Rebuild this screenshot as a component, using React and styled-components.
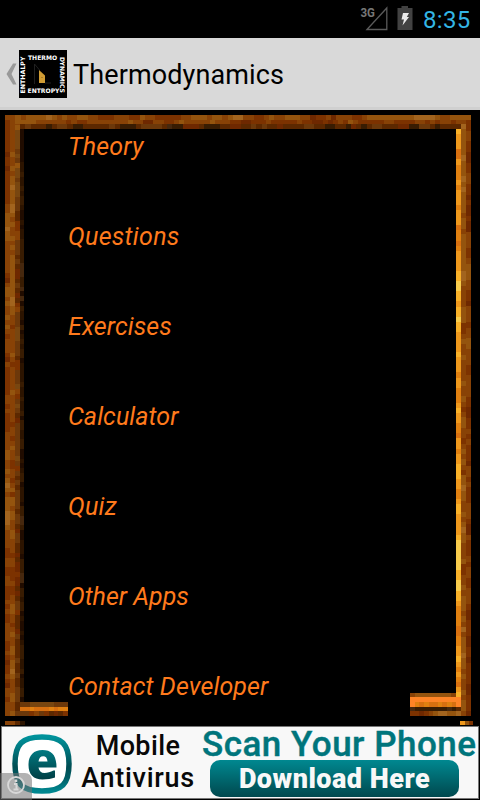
import React from 'react'
import styled, { createGlobalStyle } from 'styled-components'

const GlobalStyle = createGlobalStyle`
  body {
    margin: 0;
    background: #000;
    font-family: Roboto, sans-serif;
    overflow: hidden;
  }
`

const menu = [
  { label: 'Theory', spacing: 0.2 },
  { label: 'Questions', spacing: 0.3 },
  { label: 'Exercises', spacing: 0.12 },
  { label: 'Calculator', spacing: 0.08 },
  { label: 'Quiz', spacing: 0.25 },
  { label: 'Other Apps', spacing: 0 },
  { label: 'Contact Developer', spacing: 0.12 },
]

const WOOD = {
  a: '#7c3200',
  b: '#884206',
  c: '#94540e',
  d: '#a2641e',
  e: '#6e2800',
  f: '#5c2800',
  g: '#2c1400',
  h: '#381c02',
  i: '#46280e',
  j: '#200c00',
  k: '#6c380a',
  l: '#784610',
  o: '#e08010',
  p: '#ee981c',
  q: '#f8b028',
  r: '#f8cc4c',
  s: '#d87010',
  t: '#ff8426',
}

// One letter is one block of the pixelated wood, in order along the strip.
const strips = [
  { x: 5, y: 115, w: 5, h: 601, dir: 'v', cells: 'baaaaaaaeaaeaaaaaaabbcccdccbbbbbbbaebccbcbbcbcbabbbaebaaaaaabbabaaaabbbbccbbcbcdcbcccdddcbbbbaabbaabbaaababaabbbbaabaeaabaebbabbb' },
  { x: 10, y: 115, w: 5, h: 601, dir: 'v', cells: 'bbbbbbbbcbbcbccdcccddcbcbbcbcbcccccccccddccbbabbbbbcbabbbbbcbbbbbbabbabcbbaabbabcaccbccbbccbbbabbaaabaabbccbbabcbbccbccdcbbbccbbc' },
  { x: 15, y: 120, w: 5, h: 596, dir: 'v', cells: 'bcllllklkcllklllkkkffaabbkkkfkfeefkfefabkkklllkkkfaakkklbaklkfekkkkkkklkakfkfkkkkfkkfekkffefeeaeefefkkafffekffffkffkffkkkfff' },
  { x: 20, y: 129, w: 4, h: 578, dir: 'v', cells: 'jjjjjjjgghgghghhgjjgjgghhhhhiiihhijijhggjhjghghhjgggghgghgghjhhgghhjjgjghhjgggjhhiihjjgggjhhhiijhhghhjgjjgjghhhgghjgghhjg' },
  { x: 5, y: 115, w: 466, h: 5, dir: 'h', cells: 'bbcbccccdcbcbbccbbaaabbbaacbbaaaaabbcccbccbcddbbaabcbbcccbbeaabebbbaabcccccccccddddcbbcccc' },
  { x: 15, y: 120, w: 451, h: 4, dir: 'h', cells: 'ccccbbbbbbabaabbbbbbbbcbbeebbaabcbbbbbcbbbaaeeaaabaaaaabaaeeaeabacbaaaaabbaaaabbababbabb' },
  { x: 20, y: 124, w: 441, h: 5, dir: 'h', cells: 'fkfffhfkkfhhfffffkfhhhfkkkkfihheeefhhhffeeffkfkffeffffkkffhhffhefhfkkfffeehhkkfhffff' },
  { x: 456, y: 129, w: 5, h: 568, dir: 'v', cells: 'qpppsspooopopppopppsoosoppppqqrrqqpqqrqqppppqpppoppooopqppoosppoppqqqppoopqqppppqrrrrrrqqrrqqpoooossooppqpopospq' },
  { x: 461, y: 124, w: 5, h: 592, dir: 'v', cells: 'dcccccdcccdcdccccbccbcccccccddcbbbbcccaabcbbcbbbbcbbcbabccbbabcbcbaccdccbbcbcdccbbbcaabbcbcccbcbdbcccdccbcbbcbccb' },
  { x: 466, y: 120, w: 5, h: 596, dir: 'v', cells: 'aabbaaeeaabbaaeaeeaeebbbaabcccbbaaebbbabbccbbbaabbbbaaeeaababaaaebbabaaabbbaeebaaababbaabbbaeeaaaeeaaeaaaaeeaaae' },
  { x: 20, y: 702, w: 48, h: 5, dir: 'h', cells: 'kklllllkkk' },
  { x: 20, y: 707, w: 48, h: 4, dir: 'h', cells: 'ssosssosoo' },
  { x: 15, y: 711, w: 53, h: 5, dir: 'h', cells: 'kkkabkafefa' },
  { x: 410, y: 693, w: 46, h: 4, dir: 'h', cells: 'bccccccccb' },
  { x: 410, y: 697, w: 51, h: 5, dir: 'h', cells: 'ttttttttttt' },
  { x: 410, y: 702, w: 51, h: 5, dir: 'h', cells: 'tosossosost' },
  { x: 410, y: 707, w: 51, h: 4, dir: 'h', cells: 'ihhhhhhhihf' },
  { x: 410, y: 711, w: 51, h: 5, dir: 'h', cells: 'aaeabcddccd' },
  { x: 5, y: 721, w: 20, h: 4, dir: 'h', cells: 'bbfg' },
  { x: 460, y: 721, w: 5, h: 4, dir: 'h', cells: 'p' },
  { x: 465, y: 721, w: 8, h: 4, dir: 'h', cells: 'ca' },
]

const WoodFrame = () => (
  <FrameArt viewBox="0 110 480 616" shapeRendering="crispEdges" aria-hidden="true">
    {strips.map((s, n) => {
      const vertical = s.dir === 'v'
      const size = (vertical ? s.h : s.w) / s.cells.length
      return s.cells.split('').map((cell, i) => (
        <rect
          key={`${n}-${i}`}
          x={vertical ? s.x : s.x + i * size}
          y={vertical ? s.y + i * size : s.y}
          width={vertical ? s.w : size}
          height={vertical ? size : s.h}
          fill={WOOD[cell]}
        />
      ))
    })}
  </FrameArt>
)

const AppLogo = () => (
  <svg width="48" height="48" viewBox="0 0 48 48">
    <rect width="48" height="48" fill="#000" />
    <g fill="#fff" fontFamily="DejaVu Sans, sans-serif" fontWeight="bold" fontSize="6.2">
      <text x="9" y="10.3" textLength="29" lengthAdjust="spacingAndGlyphs">THERMO</text>
      <text x="8.5" y="43" textLength="32" lengthAdjust="spacingAndGlyphs">ENTROPY</text>
      <text transform="translate(6 43.5) rotate(-90)" textLength="37" lengthAdjust="spacingAndGlyphs">ENTHALPY</text>
      <text transform="translate(41.3 7) rotate(90)" textLength="36" lengthAdjust="spacingAndGlyphs">DYNAMICS</text>
    </g>
    <path d="M15.5 14v20M15.5 14l5 6M26 33h6" stroke="#202020" fill="none" />
    <path d="M20 20l6 5.5V33h-6z" fill="#d09c34" />
    <path d="M22.5 27.5h1" stroke="#86601c" />
  </svg>
)

const Status = () => (
  <StatusBar>
    <svg width="30" height="32" viewBox="0 0 30 32">
      <text x="0.5" y="16.600" fontFamily="Roboto" fontWeight="bold" fontSize="13" textLength="14.500" lengthAdjust="spacingAndGlyphs" fill="#777">3G</text>
      <path d="M7 29.500L26.800 8V29.500z" fill="none" stroke="#5a5a5a" strokeWidth="1.3" />
    </svg>
    <svg width="16" height="24" viewBox="0 0 16 24">
      <path d="M4.5 0h6.500v2H15.500v22H.5V2h4z" fill="#424242" />
      <path d="M6 7h6L9.800 11H12L5.500 19.500L7 13.500H4.500z" fill="#ececec" />
    </svg>
    <Clock>8:35</Clock>
  </StatusBar>
)

const Advert = () => (
  <Ad>
    <Shield width="60" height="62" viewBox="0 0 60 62">
      <defs>
        <linearGradient id="teal" x1="0" y1="0" x2="0" y2="1">
          <stop offset="0" stopColor="#007a82" />
          <stop offset="1" stopColor="#003e44" />
        </linearGradient>
        <linearGradient id="ring" x1="0" y1="0" x2="0" y2="1">
          <stop offset="0" stopColor="#00929b" />
          <stop offset=".55" stopColor="#004d53" />
          <stop offset=".75" stopColor="#005c63" />
          <stop offset="1" stopColor="#008790" />
        </linearGradient>
      </defs>
      <path d="M30 3C50 3 57 10 57 30S50 57 30 57S3 50 3 30S10 3 30 3z" fill="#fff" stroke="url(#ring)" strokeWidth="5.500" />
      <path fillRule="evenodd" d="M44.500 33.500H26.500C27 37 29 39 32.500 39C35.500 39 38.500 38 41.500 36.500H43V43.500C40 44.800 35 45.500 30.500 45.500C21.500 45.500 16.500 40.500 16.500 31C16.500 21.500 21.500 16 30.500 16C40 16 44.500 21.500 44.500 33.500zM26.500 27.500H35.500C35.200 24 33.800 22.300 31.200 22.300C28.500 22.300 27 24 26.500 27.500z" fill="url(#teal)" />
    </Shield>
    <Product>
      <ProductLine $spacing={0.4}>Mobile</ProductLine>
      <ProductLine $spacing={0.7}>Antivirus</ProductLine>
    </Product>
    <Offer>
      <Slogan>Scan Your Phone</Slogan>
      <Download>Download Here</Download>
    </Offer>
    <InfoBadge>
      <svg width="20" height="20" viewBox="0 0 20 20" fill="none" stroke="#d8d8d8">
        <circle cx="10" cy="10" r="8" strokeWidth="1.800" />
        <path d="M8 9h2.500v5M7.500 14.500h5" strokeWidth="2" />
        <path d="M10 4.500v2.500" strokeWidth="2.500" />
      </svg>
    </InfoBadge>
  </Ad>
)

const App = () => {
  return (
    <>
      <GlobalStyle />
      <Screen>
        <Status />
        <ActionBar>
          <Back width="13" height="24" viewBox="0 0 13 24">
            <path d="M9 1.500h3.500L7.500 12l5 10.500H9L2.500 12z" transform="translate(-2 0)" fill="#999" />
          </Back>
          <AppLogo />
          <Title>Thermodynamics</Title>
        </ActionBar>
        <Content>
          <WoodFrame />
          <Menu>
            {menu.map((item) => (
              <MenuItem key={item.label} $spacing={item.spacing}>{item.label}</MenuItem>
            ))}
          </Menu>
        </Content>
        <Advert />
      </Screen>
    </>
  )
}

const Screen = styled.div`
  display: flex;
  flex-direction: column;
  width: 480px;
  height: 800px;
  background: #000;
`

const StatusBar = styled.div`
  display: flex;
  justify-content: flex-end;
  align-items: flex-start;
  box-sizing: border-box;
  height: 38px;
  padding-right: 10px;

  & svg:first-child {
    margin-right: 7px;
  }

  & svg:nth-child(2) {
    margin-top: 6px;
  }
`

const Clock = styled.div`
  width: 47px;
  margin-left: 10px;
  font-size: 24px;
  line-height: 40px;
  letter-spacing: 0.3px;
  color: #33b5e5;
  white-space: nowrap;
`

const ActionBar = styled.header`
  display: flex;
  align-items: center;
  box-sizing: border-box;
  height: 72px;
  padding-left: 6px;
  background: #d9d9d9;
  border-bottom: 3px solid #d0d0d0;
  padding-top: 3px;
`

const Back = styled.svg`
  display: block;
`

const Title = styled.h1`
  margin: 0 0 0 6px;
  font-size: 27px;
  font-weight: 400;
  line-height: 32px;
  letter-spacing: 0.12px;
  padding-top: 2px;
  color: #000;
`

const Content = styled.main`
  position: relative;
  height: 616px;
`

const FrameArt = styled.svg`
  position: absolute;
  inset: 0;
  width: 480px;
  height: 616px;
`

const Menu = styled.ul`
  position: relative;
  margin: 0;
  padding: 19px 0 0 68px;
  list-style: none;
`

const MenuItem = styled.li`
  height: 90px;
  font-size: 25px;
  font-style: italic;
  line-height: 36px;
  letter-spacing: ${(props) => props.$spacing}px;
  color: #ff7a1c;

  &:last-child {
    height: 36px;
  }
`

const Ad = styled.aside`
  position: relative;
  display: flex;
  box-sizing: border-box;
  width: 478px;
  height: 73px;
  margin-left: 1px;
  background: #f8f8f8;
  border: 1px solid #777;
`

const Shield = styled.svg`
  flex: none;
  margin: 7px 0 0 10px;
`

const Product = styled.div`
  display: flex;
  flex-direction: column;
  align-items: center;
  width: 114px;
  margin-left: 9px;
  padding-top: 3px;
`

const ProductLine = styled.div`
  font-size: 27px;
  font-weight: 500;
  line-height: 32px;
  letter-spacing: ${(props) => props.$spacing}px;
  color: #080808;
`

const Offer = styled.div`
  display: flex;
  flex-direction: column;
  margin-left: 7px;
`

const Slogan = styled.div`
  height: 33px;
  font-size: 35px;
  font-weight: 500;
  line-height: 36px;
  letter-spacing: 0.5px;
  color: #00757c;
  -webkit-text-stroke: 0.4px #00757c;
  white-space: nowrap;
`

const Download = styled.div`
  width: 249px;
  height: 37px;
  margin-left: 8px;
  border-radius: 10px;
  background: linear-gradient(#008890, #00484e);
  font-size: 27px;
  font-weight: 900;
  line-height: 39px;
  letter-spacing: 0.5px;
  text-align: center;
  color: #f8f8f8;
`

const InfoBadge = styled.div`
  position: absolute;
  left: -2px;
  bottom: -2px;
  display: flex;
  justify-content: center;
  box-sizing: border-box;
  width: 32px;
  height: 27px;
  padding-top: 2px;
  border-top-right-radius: 7px;
  background: rgba(115, 115, 115, 0.55);
`

export default App
